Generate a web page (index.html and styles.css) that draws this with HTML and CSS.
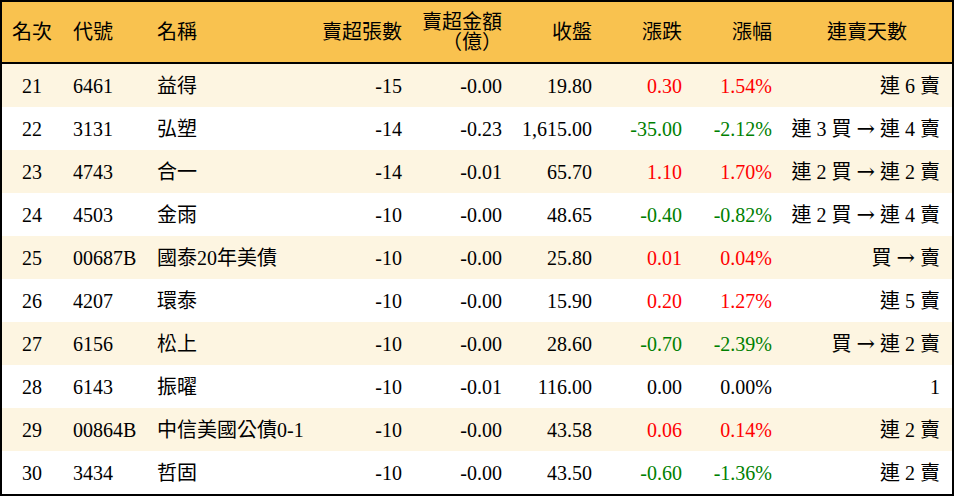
FILE: index.html
```html
<!DOCTYPE html>
<html lang="zh-Hant">
<head>
<meta charset="utf-8">
<title>賣超排行</title>
<link rel="stylesheet" href="styles.css">
</head>
<body>
<div class="board">
<table class="rank">
<colgroup>
<col class="c-rank"><col class="c-code"><col class="c-name"><col class="c-vol"><col class="c-amt"><col class="c-close"><col class="c-chg"><col class="c-pct"><col class="c-days">
</colgroup>
<thead>
<tr>
<th class="ctr">名次</th>
<th class="lft">代號</th>
<th class="lft">名稱</th>
<th class="rgt">賣超張數</th>
<th class="rgt two">賣超金額<br>（億）</th>
<th class="rgt">收盤</th>
<th class="rgt">漲跌</th>
<th class="rgt">漲幅</th>
<th class="ctr days-h">連賣天數</th>
</tr>
</thead>
<tbody>
<tr><td class="ctr">21</td><td class="lft">6461</td><td class="lft">益得</td><td class="rgt">-15</td><td class="rgt">-0.00</td><td class="rgt">19.80</td><td class="rgt up">0.30</td><td class="rgt up">1.54%</td><td class="rgt days">連 6 賣</td></tr>
<tr><td class="ctr">22</td><td class="lft">3131</td><td class="lft">弘塑</td><td class="rgt">-14</td><td class="rgt">-0.23</td><td class="rgt">1,615.00</td><td class="rgt down">-35.00</td><td class="rgt down">-2.12%</td><td class="rgt days">連 3 買 <span class="arr">→</span> 連 4 賣</td></tr>
<tr><td class="ctr">23</td><td class="lft">4743</td><td class="lft">合一</td><td class="rgt">-14</td><td class="rgt">-0.01</td><td class="rgt">65.70</td><td class="rgt up">1.10</td><td class="rgt up">1.70%</td><td class="rgt days">連 2 買 <span class="arr">→</span> 連 2 賣</td></tr>
<tr><td class="ctr">24</td><td class="lft">4503</td><td class="lft">金雨</td><td class="rgt">-10</td><td class="rgt">-0.00</td><td class="rgt">48.65</td><td class="rgt down">-0.40</td><td class="rgt down">-0.82%</td><td class="rgt days">連 2 買 <span class="arr">→</span> 連 4 賣</td></tr>
<tr><td class="ctr">25</td><td class="lft">00687B</td><td class="lft">國泰20年美債</td><td class="rgt">-10</td><td class="rgt">-0.00</td><td class="rgt">25.80</td><td class="rgt up">0.01</td><td class="rgt up">0.04%</td><td class="rgt days">買 <span class="arr">→</span> 賣</td></tr>
<tr><td class="ctr">26</td><td class="lft">4207</td><td class="lft">環泰</td><td class="rgt">-10</td><td class="rgt">-0.00</td><td class="rgt">15.90</td><td class="rgt up">0.20</td><td class="rgt up">1.27%</td><td class="rgt days">連 5 賣</td></tr>
<tr><td class="ctr">27</td><td class="lft">6156</td><td class="lft">松上</td><td class="rgt">-10</td><td class="rgt">-0.00</td><td class="rgt">28.60</td><td class="rgt down">-0.70</td><td class="rgt down">-2.39%</td><td class="rgt days">買 <span class="arr">→</span> 連 2 賣</td></tr>
<tr><td class="ctr">28</td><td class="lft">6143</td><td class="lft">振曜</td><td class="rgt">-10</td><td class="rgt">-0.01</td><td class="rgt">116.00</td><td class="rgt">0.00</td><td class="rgt">0.00%</td><td class="rgt days">1</td></tr>
<tr><td class="ctr">29</td><td class="lft">00864B</td><td class="lft">中信美國公債0-1</td><td class="rgt">-10</td><td class="rgt">-0.00</td><td class="rgt">43.58</td><td class="rgt up">0.06</td><td class="rgt up">0.14%</td><td class="rgt days">連 2 賣</td></tr>
<tr><td class="ctr">30</td><td class="lft">3434</td><td class="lft">哲固</td><td class="rgt">-10</td><td class="rgt">-0.00</td><td class="rgt">43.50</td><td class="rgt down">-0.60</td><td class="rgt down">-1.36%</td><td class="rgt days">連 2 賣</td></tr>
</tbody>
</table>
</div>
</body>
</html>
```
FILE: styles.css
```css
html, body {
  margin: 0;
  padding: 0;
  background: #ffffff;
}
body {
  font-family: "Liberation Serif", "Noto Sans CJK TC", serif;
  font-size: 20px;
  color: #000000;
  text-spacing-trim: space-all;
}
.board {
  width: 950px;
  border: 2px solid #000000;
}
.rank {
  width: 950px;
  table-layout: fixed;
  border-collapse: separate;
  border-spacing: 0;
}
.c-rank { width: 60px; }
.c-code { width: 84px; }
.c-name { width: 154px; }
.c-vol { width: 112px; }
.c-amt { width: 100px; }
.c-close { width: 90px; }
.c-chg { width: 90px; }
.c-pct { width: 90px; }
.c-days { width: 170px; }

.rank th {
  background: #f9c24f;
  font-weight: normal;
  height: 60px;
  padding: 0;
  line-height: 20px;
  border-bottom: 2px solid #000000;
  vertical-align: middle;
  white-space: nowrap;
}
.rank td {
  height: 43px;
  padding: 0;
  line-height: 22px;
  vertical-align: middle;
  white-space: nowrap;
}
.rank tbody tr:nth-child(odd) td {
  background: #fdf5e1;
}
.ctr { text-align: center; }
.lft { text-align: left; padding-left: 11px !important; }
.rgt { text-align: right; padding-right: 10px !important; }
.days { padding-right: 12px !important; }
.days-h { text-align: center; }
.arr {
  font-family: "DejaVu Serif", serif;
  font-size: 22px;
  font-weight: normal;
}
.up { color: #ff0000; }
.down { color: #008000; }
```
